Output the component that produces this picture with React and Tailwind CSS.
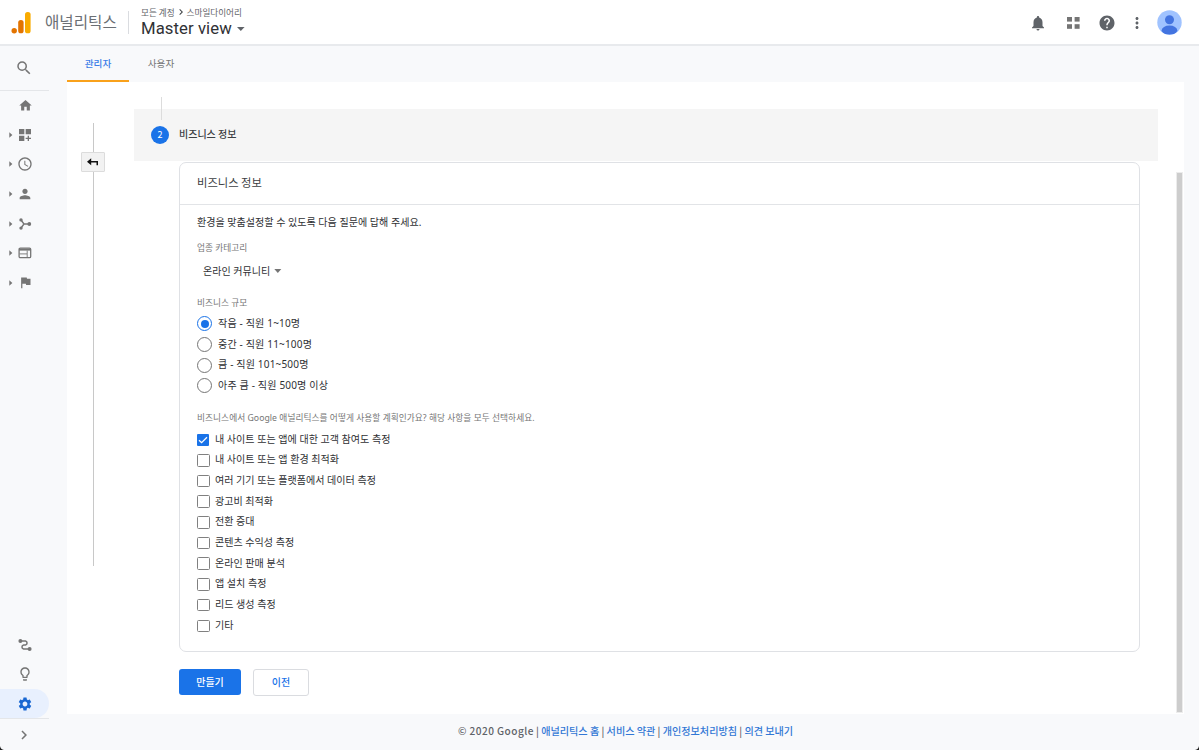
import React from "react";
import {
  MdHome,
  MdSearch,
  MdDashboardCustomize,
  MdAccessTime,
  MdPerson,
  MdFlag,
  MdOutlineLightbulb,
  MdSettings,
  MdChevronRight,
  MdNotifications,
  MdHelp,
  MdMoreVert,
} from "react-icons/md";

const BranchIcon = () => (
  <svg width="14" height="14" viewBox="0 0 14 14" fill="none" stroke="currentColor" strokeWidth="1.4">
    <path d="M3 3 L6 7 L3 11 M6 7 H11" />
    <circle cx="3" cy="2.9" r="1.7" fill="currentColor" stroke="none" />
    <circle cx="3" cy="11.1" r="1.7" fill="currentColor" stroke="none" />
    <circle cx="11.3" cy="7" r="1.9" fill="currentColor" stroke="none" />
  </svg>
);

const BrowserIcon = () => (
  <svg width="14" height="12" viewBox="0 0 14 12" fill="none" stroke="currentColor">
    <rect x="1.1" y="1.1" width="11.6" height="9.6" rx="1.2" strokeWidth="1.3" />
    <path d="M1 2.6 H13" strokeWidth="2" />
    <path d="M1.5 6.9 H9 M9.2 3.5 V10.5" strokeWidth="0.9" />
  </svg>
);

const RouteIcon = () => (
  <svg width="14" height="14" viewBox="0 0 14 14" fill="none" stroke="currentColor" strokeWidth="1.5">
    <path d="M2 3 H7.5 A2 2 0 0 1 7.5 6.9 H5.6 A2.1 2.1 0 0 0 5.6 11 H11.5" />
    <circle cx="2.4" cy="3" r="2" fill="currentColor" stroke="none" />
    <circle cx="11.6" cy="10.9" r="2" fill="currentColor" stroke="none" />
  </svg>
);

const navItems = [
  { id: "home", icon: <MdHome size={15} />, expandable: false },
  { id: "custom", icon: <MdDashboardCustomize size={16} />, expandable: true },
  { id: "realtime", icon: <MdAccessTime size={16} />, expandable: true },
  { id: "audience", icon: <MdPerson size={16} />, expandable: true },
  { id: "acquisition", icon: <BranchIcon />, expandable: true },
  { id: "behavior", icon: <BrowserIcon />, expandable: true },
  { id: "conversions", icon: <MdFlag size={15} />, expandable: true },
];

const sizes = ["작음 - 직원 1~10명", "중간 - 직원 11~100명", "큼 - 직원 101~500명", "아주 큼 - 직원 500명 이상"];

const goals = [
  "내 사이트 또는 앱에 대한 고객 참여도 측정",
  "내 사이트 또는 앱 환경 최적화",
  "여러 기기 또는 플랫폼에서 데이터 측정",
  "광고비 최적화",
  "전환 증대",
  "콘텐츠 수익성 측정",
  "온라인 판매 분석",
  "앱 설치 측정",
  "리드 생성 측정",
  "기타",
];

const links = ["애널리틱스 홈", "서비스 약관", "개인정보처리방침", "의견 보내기"];

function Header() {
  return (
    <header className="flex h-[46px] shrink-0 items-start border-b-2 border-[#e8eaed] bg-white">
      <svg className="mt-[11px] ml-[11px] shrink-0" width="21" height="23" viewBox="0 0 21 23">
        <rect x="14" y="1" width="5.6" height="21.3" rx="2.6" fill="#f9ab00" />
        <rect x="7.2" y="9" width="5.4" height="13.3" rx="2.6" fill="#e37400" />
        <circle cx="3.2" cy="19.7" r="2.7" fill="#e37400" />
      </svg>
      <div className="ml-[13px] w-[83px] pt-[9px] text-[15.6px] leading-[24px] text-[#6b6f74]">애널리틱스</div>
      <div className="mt-[11px] h-[23px] w-px bg-[#dadce0]" />
      <div className="ml-[12px] pt-[6px]">
        <div className="flex h-[12px] items-center text-[8.6px] leading-[12px] text-[#5f6368]">
          <span>모든 계정</span>
          <MdChevronRight size={12} className="text-[#3c4043]" />
          <span>스마일다이어리</span>
        </div>
        <div className="flex h-[22px] items-center">
          <span className="font-[Roboto,'Noto_Sans_CJK_KR',sans-serif] text-[16.7px] leading-[20px] tracking-[0.08px] text-[#303134]">Master view</span>
          <svg className="ml-[5px]" width="8" height="4" viewBox="0 0 8 4">
            <path d="M0 0 H7.6 L3.8 4 Z" fill="#5f6368" />
          </svg>
        </div>
      </div>
      <div className="ml-auto flex h-[45px] items-center pr-[17px] text-[#5f6368]">
        <MdNotifications size={18} />
        <svg className="ml-[20px]" width="13" height="12" viewBox="0 0 13 12" fill="#757575">
          <rect x="0" y="0" width="5" height="4.6" />
          <rect x="7.6" y="0" width="5" height="4.6" />
          <rect x="0" y="7.2" width="5" height="4.6" />
          <rect x="7.6" y="7.2" width="5" height="4.6" />
        </svg>
        <MdHelp size={18} className="ml-[18px]" />
        <MdMoreVert size={18} className="ml-[12px]" />
        <svg className="ml-[11px]" width="25" height="25" viewBox="0 0 25 25">
          <defs>
            <clipPath id="avatar">
              <circle cx="12.5" cy="12.5" r="12.2" />
            </clipPath>
          </defs>
          <g clipPath="url(#avatar)">
            <rect width="25" height="25" fill="#a0c3ff" />
            <circle cx="12.5" cy="9.8" r="4.5" fill="#4374e0" />
            <ellipse cx="12.5" cy="20.2" rx="7.8" ry="4.6" fill="#4374e0" />
          </g>
        </svg>
      </div>
    </header>
  );
}

function Sidebar() {
  return (
    <nav className="flex w-[67px] shrink-0 flex-col text-[#757575]">
      <div className="flex h-[44.5px] w-[49px] items-center border-b border-[#e4e6e9] pt-[1px] pl-[15px]">
        <MdSearch size={18} />
      </div>
      <div>
        {navItems.map((item) => (
          <div key={item.id} className="flex h-[29.6px] w-[50px] items-center">
            <div className="w-[17px] pl-[9px]">
              {item.expandable && (
                <svg width="4" height="6" viewBox="0 0 4 6">
                  <path d="M0.3 0.3 L3.4 3 L0.3 5.7 Z" fill="currentColor" />
                </svg>
              )}
            </div>
            <div className="flex w-[16px] justify-center">{item.icon}</div>
          </div>
        ))}
      </div>
      <div className="mt-auto">
        <div className="flex h-[29.6px] items-center pl-[18px] pt-[1px]">
          <RouteIcon />
        </div>
        <div className="flex h-[29.6px] items-center pl-[17px] pt-[1px]">
          <MdOutlineLightbulb size={16} />
        </div>
        <div className="flex h-[29.5px] w-[49px] items-center rounded-r-full bg-[#e8f0fe] pt-[1px] pl-[17px] text-[#1967d2]">
          <MdSettings size={16} />
        </div>
        <div className="flex h-[32px] w-[49px] items-center border-t border-[#e4e6e9] pl-[15px]">
          <MdChevronRight size={18} />
        </div>
      </div>
    </nav>
  );
}

function Rail() {
  return (
    <div className="flex h-[443px] w-[24px] shrink-0 flex-col items-center">
      <div className="h-[29px] w-px bg-[#c8c8c8]" />
      <div className="flex h-[20px] w-[24px] items-center justify-center rounded-[1px] border border-[#dcdcdc] bg-[#f2f2f2]">
        <svg width="12" height="9" viewBox="0 0 12 9">
          <path d="M0 3.7 L4.2 0.2 V2.9 H11 V7.3 H9.5 V4.5 H4.2 V7.2 Z" fill="#111" />
        </svg>
      </div>
      <div className="w-px flex-1 bg-[#c8c8c8]" />
    </div>
  );
}

function InfoCard() {
  return (
    <section className="h-[490px] w-[961px] rounded-[7px] border border-[#dfe1e5] bg-white">
      <h2 className="h-[42px] border-b border-[#e2e4e7] pt-[9px] pl-[17px] text-[11.3px] leading-[20px] text-[#3c4043]">비즈니스 정보</h2>
      <div className="pl-[17px] font-['Noto_Sans','Noto_Sans_CJK_KR',sans-serif] text-[10.05px] text-[#303134]">
        <p className="h-[26px] pt-[9px] leading-[16px]">환경을 맞춤설정할 수 있도록 다음 질문에 답해 주세요.</p>
        <div className="mt-[11px] h-[12px] text-[8.7px] leading-[12px] text-[#757575]">업종 카테고리</div>
        <div className="mt-[8px] flex h-[18px] items-center pl-[6px]">
          <span className="leading-[16px]">온라인 커뮤니티</span>
          <svg className="ml-[4px]" width="8" height="4" viewBox="0 0 8 4">
            <path d="M0.3 0 H7.3 L3.8 4 Z" fill="#757575" />
          </svg>
        </div>
        <div className="mt-[17px] h-[12px] text-[8.7px] leading-[12px] text-[#757575]">비즈니스 규모</div>
        <div className="mt-[4.5px] tracking-[0.15px]">
          {sizes.map((label, i) => (
            <div key={label} className="flex h-[20.7px] items-center">
              {i === 0 ? (
                <div className="flex h-[15px] w-[15px] items-center justify-center rounded-full border-[1.5px] border-[#1a73e8]">
                  <div className="h-[8px] w-[8px] rounded-full bg-[#1a73e8]" />
                </div>
              ) : (
                <div className="h-[15px] w-[15px] rounded-full border border-[#757575]" />
              )}
              <span className="ml-[6px] pb-[2px] leading-[16px]">{label}</span>
            </div>
          ))}
        </div>
        <div className="mt-[16px] h-[12px] text-[8.7px] leading-[12px] tracking-[0.04px] text-[#757575]">
          비즈니스에서 Google 애널리틱스를 어떻게 사용할 계획인가요? 해당 사항을 모두 선택하세요.
        </div>
        <div className="mt-[5px]">
          {goals.map((label, i) => (
            <div key={label} className="flex h-[20.7px] items-center">
              {i === 0 ? (
                <div className="flex h-[12px] w-[12px] items-center justify-center rounded-[1px] bg-[#1a73e8]">
                  <svg width="10" height="8" viewBox="0 0 10 8" fill="none" stroke="#fff" strokeWidth="1.3">
                    <path d="M1 4.2 L3.6 6.7 L9 1.2" />
                  </svg>
                </div>
              ) : (
                <div className="h-[12.5px] w-[12.5px] rounded-[1.5px] border border-[#808080]" />
              )}
              <span className={i === 0 ? "ml-[6px] pb-[2px] leading-[16px]" : "ml-[5.5px] pb-[2px] leading-[16px]"}>{label}</span>
            </div>
          ))}
        </div>
      </div>
    </section>
  );
}

export default function App() {
  return (
    <div className="relative flex h-[750px] w-[1200px] flex-col overflow-hidden border-r border-white bg-[#f8f9fb] font-['Noto_Sans_CJK_KR',sans-serif]">
      <Header />
      <div className="flex min-h-0 flex-1">
        <Sidebar />
        <main className="flex min-w-0 flex-1 flex-col">
          <div className="flex h-[36px] shrink-0 text-[9.6px] leading-[34px]">
            <div className="w-[62px] border-b-2 border-[#f9a11b] text-center font-medium text-[#3b7de8]">관리자</div>
            <div className="w-[64px] text-center text-[#757575]">사용자</div>
          </div>
          <div className="flex h-[632px] w-[1117px] shrink-0 bg-white">
            <div className="pt-[41px] pl-[14px]">
              <Rail />
            </div>
            <div className="ml-[29px] w-[1024px] shrink-0 pt-[15px]">
              <div className="ml-[27px] h-[12px] w-px bg-[#dcdcdc]" />
              <div className="flex h-[52px] bg-[#f5f5f5]">
                <div className="flex w-[45px] flex-col pl-[17px]">
                  <div className="ml-[10px] h-[11px] w-px bg-[#dcdcdc]" />
                  <div className="mt-[6px] flex h-[18px] w-[18px] items-center justify-center rounded-full bg-[#1a73e8] text-[9px] leading-[18px] text-white">2</div>
                </div>
                <div className="pt-[16px] text-[10px] leading-[18px] font-medium text-[#3c4043]">비즈니스 정보</div>
              </div>
              <div className="ml-[45px] pt-[1px]">
                <InfoCard />
                <div className="mt-[17px] flex gap-[12px] text-[10px] font-medium">
                  <button className="h-[26px] w-[62px] rounded-[3px] bg-[#1a73e8] pb-[1px] text-white">만들기</button>
                  <button className="h-[27px] w-[56px] rounded-[3px] border border-[#dadce0] bg-white pb-[2px] text-[#1a73e8]">이전</button>
                </div>
              </div>
            </div>
            <div className="mt-[90px] ml-[18px] h-[541px] w-[7px] border border-[#ececec] bg-[#cdcdcd]" />
          </div>
          <footer className="w-[1117px] pt-[8px] text-center text-[10.1px] leading-[18px] font-medium text-[#5f6368]">
            <span className="tracking-[0.45px]">© 2020 Google</span>
            {links.map((link) => (
              <React.Fragment key={link}>
                {" | "}
                <a className="text-[#3277d5]">{link}</a>
              </React.Fragment>
            ))}
          </footer>
        </main>
      </div>
      <svg className="absolute bottom-0 left-0" width="4" height="4" viewBox="0 0 4 4">
        <path d="M0 0 Q0.6 3.4 4 4 H0 Z" fill="#222" />
      </svg>
      <svg className="absolute right-0 bottom-0" width="4" height="4" viewBox="0 0 4 4">
        <path d="M4 0 Q3.4 3.4 0 4 H4 Z" fill="#222" />
      </svg>
    </div>
  );
}
